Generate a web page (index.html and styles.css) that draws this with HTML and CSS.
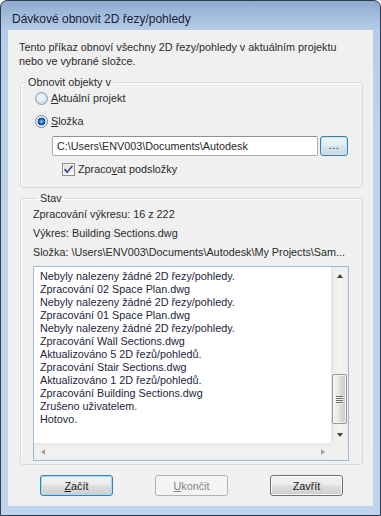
FILE: index.html
```html
<!DOCTYPE html>
<html lang="cs">
<head>
<meta charset="utf-8">
<title>Dávkové obnovit 2D řezy/pohledy</title>
<link rel="stylesheet" href="styles.css">
</head>
<body>
<div class="window">
  <div class="titlebar"><span class="title">Dávkové obnovit 2D řezy/pohledy</span></div>
  <div class="client">
    <p class="desc">Tento příkaz obnoví všechny 2D řezy/pohledy v aktuálním projektu<br>nebo ve vybrané složce.</p>

    <fieldset class="group group-target">
      <legend>Obnovit objekty v</legend>
      <div class="opt-row">
        <span class="radio"></span><span class="opt-label"><u>A</u>ktuální projekt</span>
      </div>
      <div class="opt-row opt-row-2">
        <span class="radio checked"></span><span class="opt-label"><u>S</u>ložka</span>
      </div>
      <div class="path-row">
        <div class="textbox">C:\Users\ENV003\Documents\Autodesk</div>
        <div class="btn btn-browse">...</div>
      </div>
      <div class="check-row">
        <span class="checkbox"><svg width="11" height="11" viewBox="0 0 11 11"><path d="M1.5 5.2 L4.2 8.2 L9.5 1.8" fill="none" stroke="#3b4f80" stroke-width="1.8" stroke-linejoin="miter"/></svg></span>
        <span class="opt-label">Zpraco<u>v</u>at podsložky</span>
      </div>
    </fieldset>

    <fieldset class="group group-status">
      <legend>Stav</legend>
      <div class="stat">Zpracování výkresu: 16 z 222</div>
      <div class="stat">Výkres: Building Sections.dwg</div>
      <div class="stat">Složka: \Users\ENV003\Documents\Autodesk\My Projects\Sam...</div>
      <div class="listbox">
        <div class="list-main">
          <div class="list-lines">
            <div>Nebyly nalezeny žádné 2D řezy/pohledy.</div>
            <div>Zpracování 02 Space Plan.dwg</div>
            <div>Nebyly nalezeny žádné 2D řezy/pohledy.</div>
            <div>Zpracování 01 Space Plan.dwg</div>
            <div>Nebyly nalezeny žádné 2D řezy/pohledy.</div>
            <div>Zpracování Wall Sections.dwg</div>
            <div>Aktualizováno 5 2D řezů/pohledů.</div>
            <div>Zpracování Stair Sections.dwg</div>
            <div>Aktualizováno 1 2D řezů/pohledů.</div>
            <div>Zpracování Building Sections.dwg</div>
            <div>Zrušeno uživatelem.</div>
            <div>Hotovo.</div>
          </div>
          <div class="vscroll">
            <div class="sb-btn"><span class="arrow-up"></span></div>
            <div class="vtrack">
              <div class="vthumb"><span class="grip"></span><span class="grip"></span><span class="grip"></span><span class="grip"></span></div>
            </div>
            <div class="sb-btn"><span class="arrow-down"></span></div>
          </div>
        </div>
        <div class="hscroll-row">
          <div class="hscroll">
            <div class="sb-btn-h"><span class="arrow-left"></span></div>
            <div class="htrack"></div>
            <div class="sb-btn-h"><span class="arrow-right"></span></div>
          </div>
          <div class="corner"></div>
        </div>
      </div>
    </fieldset>

    <div class="buttons">
      <div class="btn btn-main btn-default"><u>Z</u>ačít</div>
      <div class="btn btn-main btn-disabled"><u>U</u>končit</div>
      <div class="btn btn-main">Zavřít</div>
    </div>
  </div>
</div>
</body>
</html>
```
FILE: styles.css
```css
* { box-sizing: border-box; }
html, body { margin: 0; padding: 0; background: #ffffff; }
body {
  font-family: "Liberation Sans", Arial, sans-serif;
  font-size: 11px;
  color: #2a2a2a;
}

.window {
  width: 381px;
  height: 516px;
  border: 1px solid #2e3b4c;
  border-radius: 7px 7px 0 0;
  background: linear-gradient(#8eaacd 0px, #a4bedd 16px, #b5cdea 30px, #bcd3ec 120px, #bdd4ec 100%);
  display: flex;
  flex-direction: column;
  overflow: hidden;
}

.titlebar {
  height: 29px;
  padding: 11px 0 0 11px;
  flex: none;
}
.title {
  display: block;
  font-size: 12px;
  line-height: 14px;
  color: #221c38;
}

.client {
  flex: 1;
  margin: 0 7px 9px 7px;
  background: #f0f0f0;
  display: flex;
  flex-direction: column;
}

.desc {
  margin: 0;
  padding: 10px 0 0 11px;
  line-height: 14px;
  font-size: 10.8px;
}

.group {
  margin: 7px 10px 0 12px;
  border: 1px solid #d2dbe2;
  border-radius: 3px;
  box-shadow: inset 1px 1px 0 #fafafa;
  min-width: 0;
}
.group legend {
  margin-left: 5px;
  padding: 0 2px;
  line-height: 14px;
  font-size: 10.8px;
}

.group-target {
  padding: 1px 0 10px 0;
}

.opt-row {
  height: 16px;
  display: flex;
  align-items: center;
  padding-left: 14px;
}
.opt-row-2 { margin-top: 7px; }
.opt-label { margin-left: 3px; line-height: 14px; font-size: 10.8px; }

.radio {
  width: 13px;
  height: 13px;
  border-radius: 50%;
  border: 1px solid #8a9bb0;
  background: radial-gradient(circle at 45% 40%, #f4f8fc 0%, #dfe8f3 45%, #b8c9dc 100%);
  flex: none;
}
.radio.checked {
  border-color: #6d87a8;
  background:
    radial-gradient(circle at 50% 50%, #8ec8f0 0px, #2a7ccc 2px, #0c3a78 3.6px, transparent 4.2px),
    radial-gradient(circle, #ffffff 0%, #eef3f8 60%, #d5dfea 100%);
}

.path-row {
  margin-top: 7px;
  display: flex;
  padding-left: 31px;
}
.textbox {
  width: 266px;
  height: 20px;
  border: 1px solid #abadb3;
  border-top-color: #8e9297;
  border-radius: 2px;
  background: #ffffff;
  padding: 0 0 0 4px;
  line-height: 18px;
  font-size: 10.8px;
  white-space: nowrap;
  overflow: hidden;
}

.btn {
  border: 1px solid #707070;
  border-radius: 3px;
  background: linear-gradient(#f2f2f2 0%, #ebebeb 48%, #dddddd 52%, #cfcfcf 100%);
  box-shadow: inset 0 0 0 1px rgba(255,255,255,0.75);
  display: flex;
  align-items: center;
  justify-content: center;
  font-size: 10.8px;
  color: #1a1a1a;
}
.btn-browse {
  width: 28px;
  height: 20px;
  margin-left: 2px;
  border-color: #3c7fb1;
  box-shadow: inset 0 0 0 1px #c4e5f6;
  background: linear-gradient(#ebf4fa 0%, #e2edf5 48%, #d6e3ec 52%, #cbd9e3 100%);
  padding-bottom: 3px;
  letter-spacing: 0.5px;
}

.check-row {
  margin-top: 5px;
  height: 16px;
  display: flex;
  align-items: center;
  padding-left: 41px;
}
.checkbox {
  width: 13px;
  height: 13px;
  border: 1px solid #8e8f8f;
  background: linear-gradient(135deg, #dcdcdc 0%, #f0f0f0 60%, #fdfdfd 100%);
  box-shadow: inset 0 0 0 1px #f4f4f4;
  display: flex;
  align-items: center;
  justify-content: center;
  flex: none;
}
.checkbox svg { display: block; }

.group-status {
  margin-top: 3px;
  padding: 2px 13px 3px 12px;
}
.stat {
  line-height: 14px;
  font-size: 10.8px;
  white-space: nowrap;
}
.stat + .stat { margin-top: 5px; }

.listbox {
  margin-top: 7px;
  height: 195px;
  border: 1px solid #9fbad8;
  background: #ffffff;
  display: flex;
  flex-direction: column;
}
.list-main {
  flex: 1;
  display: flex;
  min-height: 0;
}
.list-lines {
  flex: 1;
  padding: 3px 0 0 6px;
  line-height: 13px;
  font-size: 10.8px;
  white-space: nowrap;
  overflow: hidden;
  color: #24243c;
}

.vscroll {
  width: 17px;
  flex: none;
  display: flex;
  flex-direction: column;
  background: linear-gradient(to right, #e3e3e3 0%, #eeeeee 20%, #f3f3f3 60%, #ececec 100%);
}
.sb-btn {
  height: 17px;
  flex: none;
  display: flex;
  align-items: center;
  justify-content: center;
}
.arrow-up, .arrow-down, .arrow-left, .arrow-right {
  width: 0;
  height: 0;
  border-style: solid;
}
.arrow-up { border-width: 0 3.5px 4px 3.5px; border-color: transparent transparent #404040 transparent; }
.arrow-down { border-width: 4px 3.5px 0 3.5px; border-color: #404040 transparent transparent transparent; }
.vtrack {
  flex: 1;
  display: flex;
  flex-direction: column;
  justify-content: flex-end;
  padding: 0 0 2px 1px;
}
.vthumb {
  height: 50px;
  width: 15px;
  border: 1px solid #979797;
  border-radius: 2px;
  background: linear-gradient(to right, #f1f1f1 0%, #e9e9e9 45%, #d9d9d9 55%, #cdcdcd 100%);
  box-shadow: inset 0 0 0 1px rgba(255,255,255,0.7);
  display: flex;
  flex-direction: column;
  align-items: center;
  justify-content: center;
  gap: 1px;
}
.grip {
  width: 7px;
  height: 1px;
  background: #6c6c6c;
  box-shadow: 0 1px 0 #f4f4f4;
}

.hscroll-row {
  height: 17px;
  flex: none;
  display: flex;
}
.hscroll {
  flex: 1;
  display: flex;
  background: linear-gradient(#e6e6e6 0%, #efefef 20%, #f2f2f2 60%, #ebebeb 100%);
}
.sb-btn-h {
  width: 17px;
  display: flex;
  align-items: center;
  justify-content: center;
}
.htrack { flex: 1; }
.arrow-left { border-width: 3.5px 4px 3.5px 0; border-color: transparent #a3a3a3 transparent transparent; }
.arrow-right { border-width: 3.5px 0 3.5px 4px; border-color: transparent transparent transparent #a3a3a3; }
.corner {
  width: 17px;
  background: #f0f0f0;
}

.buttons {
  margin-top: 10px;
  padding-left: 32px;
  display: flex;
  gap: 42px;
}
.btn-main {
  width: 73px;
  height: 21px;
}
.btn-default {
  border-color: #3c7fb1;
  box-shadow: inset 0 0 0 1px #9fdcf6;
}
.btn-disabled {
  border-color: #adb2b5;
  background: #f4f4f4;
  box-shadow: none;
  color: #838383;
}
```
